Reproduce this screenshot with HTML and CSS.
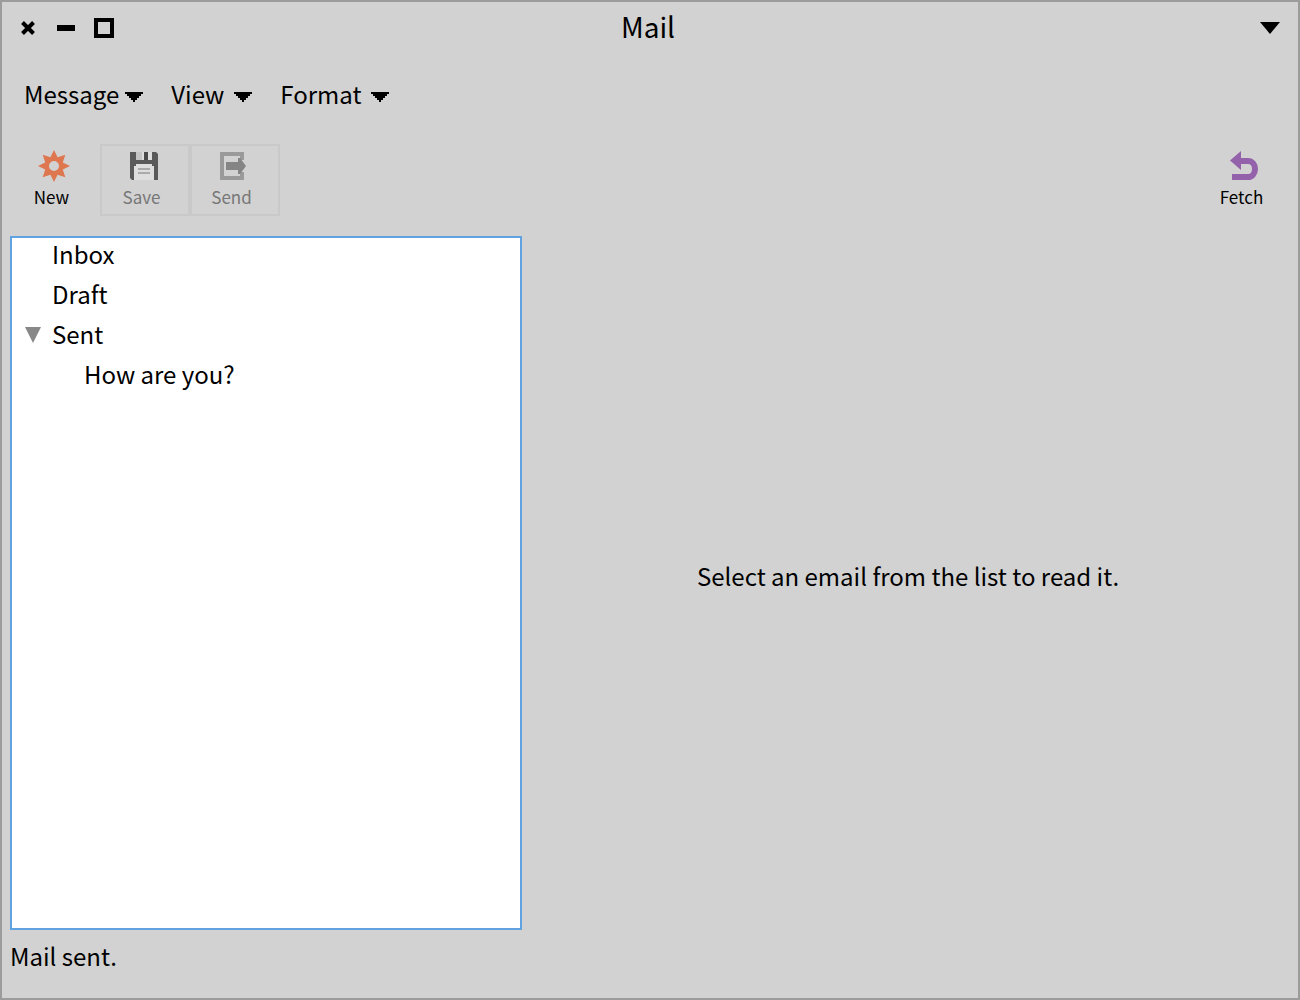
FILE: index.html
```html
<!DOCTYPE html>
<html lang="en">
<head>
<meta charset="utf-8">
<title>Mail</title>
<link rel="stylesheet" href="styles.css">
</head>
<body>
<div class="window">
  <header class="titlebar">
    <div class="window-controls">
      <button type="button" class="control" aria-label="Close"><svg width="20" height="20" viewBox="0 0 20 20"><path d="M4.500 4.500L15.500 15.500M15.500 4.500L4.500 15.500" stroke="#000" stroke-width="4"/></svg></button>
      <button type="button" class="control" aria-label="Minimize"><svg width="20" height="20" viewBox="0 0 20 20"><path d="M1 7h18v6H1z"/></svg></button>
      <button type="button" class="control" aria-label="Maximize"><svg width="20" height="20" viewBox="0 0 20 20"><path d="M2 2h16v16H2z" fill="none" stroke="#000" stroke-width="4"/></svg></button>
    </div>
    <h1 class="title">Mail</h1>
    <div class="window-menu">
      <button type="button" class="control" aria-label="Window menu"><svg width="20" height="20" viewBox="0 0 20 20"><path d="M0 4h20L10 16z"/></svg></button>
    </div>
  </header>

  <nav class="menubar">
    <button type="button" class="menu">Message <svg width="18" height="10" viewBox="0 0 18 10" shape-rendering="crispEdges"><path d="M0 0h18v2h-2v2h-2v2h-2v2h-2v2H8V8H6V6H4V4H2V2H0z"/></svg></button>
    <button type="button" class="menu menu-spaced">View <svg width="18" height="10" viewBox="0 0 18 10" shape-rendering="crispEdges"><path d="M0 0h18v2h-2v2h-2v2h-2v2h-2v2H8V8H6V6H4V4H2V2H0z"/></svg></button>
    <button type="button" class="menu menu-spaced">Format <svg width="18" height="10" viewBox="0 0 18 10" shape-rendering="crispEdges"><path d="M0 0h18v2h-2v2h-2v2h-2v2h-2v2H8V8H6V6H4V4H2V2H0z"/></svg></button>
  </nav>

  <div class="toolbar">
    <button type="button" class="tool">
      <svg width="32" height="32" viewBox="0 0 32 32"><path fill="#de7650" fill-rule="evenodd" d="M16 0L19.600 7.200L27.300 4.700L24.800 12.400L32 16L24.800 19.600L27.300 27.300L19.600 24.800L16 32L12.400 24.800L4.700 27.300L7.200 19.600L0 16L7.200 12.400L4.700 4.700L12.400 7.200ZM16 11a5 5 0 1 0 0 10a5 5 0 0 0 0-10Z"/></svg>
      <span class="tool-label">New</span>
    </button>
    <button type="button" class="tool" disabled>
      <svg width="32" height="32" viewBox="0 0 32 32"><path fill="#5a5a5a" d="M2 2h26l2 2v26H4l-2-2z"/><path fill="#dedede" d="M8 2h16v8H8zM8 14h16v2h2v14H6V16h2z"/><path fill="#c4c4c4" d="M8 2h6v8H8z"/><path fill="#4a4a4a" d="M16 2h4v8h-4z"/><path fill="#aaa" d="M10 18h12v2H10zM10 22h12v2H10z"/></svg>
      <span class="tool-label">Save</span>
    </button>
    <button type="button" class="tool" disabled>
      <svg width="32" height="32" viewBox="0 0 32 32"><path fill="none" stroke="#9a9a9a" stroke-width="4" d="M24 10V4H4v24h20v-6"/><path fill="#858585" d="M8 12h12V8h2l6 8l-6 8h-2v-4H8z"/></svg>
      <span class="tool-label">Send</span>
    </button>
    <button type="button" class="tool tool-end">
      <svg width="32" height="32" viewBox="0 0 32 32"><path fill="none" stroke="#9461ab" stroke-width="6" d="M4 27h16c4 0 7-3.500 7-8s-3-8-7-8h-8"/><path fill="#9461ab" d="M2 10.500L13 1v19z"/></svg>
      <span class="tool-label">Fetch</span>
    </button>
  </div>

  <main class="content">
    <ul class="folders">
      <li class="folder">Inbox</li>
      <li class="folder">Draft</li>
      <li class="folder"><button type="button" class="toggle" aria-label="Collapse Sent" aria-expanded="true"><svg width="16" height="16" viewBox="0 0 16 16"><path fill="#888" d="M0 0h16L8 16z"/></svg></button>Sent</li>
      <li class="folder mail">How are you?</li>
    </ul>
    <p class="reader">Select an email from the list to read it.</p>
  </main>

  <footer class="status">Mail sent.</footer>
</div>
</body>
</html>
```
FILE: styles.css
```css
* {
  box-sizing: border-box;
}

body {
  margin: 0;
  font: 24px/32px "Noto Sans CJK SC", "Noto Sans", sans-serif;
  color: #000;
}

button {
  margin: 0;
  padding: 0;
  border: 0;
  background: none;
  font: inherit;
  color: inherit;
}

svg {
  display: block;
}

.window {
  display: flex;
  flex-direction: column;
  min-height: 100vh;
  padding: 8px 8px 26px;
  border: 2px solid #9c9c9c;
  background: #d2d2d2;
}

.titlebar {
  display: grid;
  grid-template-columns: 1fr auto 1fr;
  align-items: center;
  padding: 0 8px;
  height: 36px;
}

.window-controls {
  display: flex;
  gap: 18px;
}

.window-menu {
  display: flex;
  justify-content: flex-end;
  padding-right: 2px;
}

.title {
  margin: 0;
  padding: 0 4px 4px 0;
  font-size: 28px;
  font-weight: 400;
}

.menubar {
  display: flex;
  gap: 28px;
  padding: 32px 14px 0;
}

.menu {
  display: flex;
  align-items: center;
  gap: 6px;
}

.menu svg {
  margin-top: 6px;
}

.menu-spaced {
  gap: 10px;
}

.toolbar {
  display: flex;
  margin-top: 34px;
}

.tool {
  display: flex;
  flex-direction: column;
  align-items: center;
  width: 90px;
  height: 72px;
  border: 2px solid transparent;
  padding: 4px 2px 0 0;
  font-size: 17px;
  line-height: 26px;
}

.tool:disabled {
  border-color: #c9c9c9;
  color: #777;
}

.tool-label {
  padding: 2px 5px 0 0;
}

.tool-end {
  margin-left: auto;
}

.content {
  flex: 1;
  display: grid;
  grid-template-columns: 2fr 3fr;
  margin-top: 20px;
}

.folders {
  margin: 0;
  padding: 0;
  border: 2px solid #61a3e0;
  background: #fff;
  list-style: none;
}

.folder {
  position: relative;
  padding: 0 0 8px 40px;
}

.mail {
  padding-left: 72px;
}

.toggle {
  position: absolute;
  left: 13px;
  top: 9px;
}

.reader {
  display: flex;
  align-items: center;
  justify-content: center;
  margin: 0;
  padding: 0 0 14px 4px;
}

.status {
  margin-top: 10px;
}
```
